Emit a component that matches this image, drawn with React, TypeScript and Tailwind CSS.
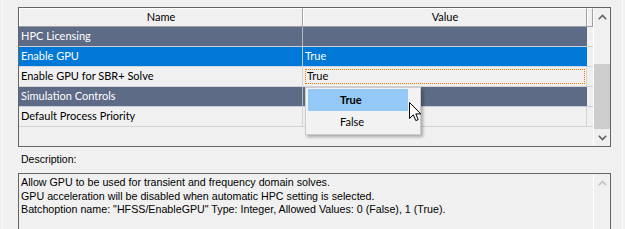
import React from 'react';

type Row = {
  name: string;
  value?: string;
  kind: 'cat' | 'sel' | 'focus' | 'prop';
};

const rows: Row[] = [
  { name: 'HPC Licensing', kind: 'cat' },
  { name: 'Enable GPU', value: 'True', kind: 'sel' },
  { name: 'Enable GPU for SBR+ Solve', value: 'True', kind: 'focus' },
  { name: 'Simulation Controls', kind: 'cat' },
  { name: 'Default Process Priority', value: '', kind: 'prop' },
];

const Chevron = ({ down = false, color = '#606060' }: { down?: boolean; color?: string }) => (
  <svg width="9" height="6" viewBox="0 0 9 6" className={down ? 'rotate-180' : ''}>
    <polyline points="0.8,5.2 4.5,1.5 8.2,5.2" fill="none" stroke={color} strokeWidth="1.6" />
  </svg>
);

const GridRow = ({ row }: { row: Row }) => {
  if (row.kind === 'cat') {
    return (
      <div className="flex h-[20px] border-b border-[#c9ced8]">
        <div className="w-[284px] border-r border-[#b4bac6] bg-[#5e6b86] pl-[2px] flex items-center text-white">
          {row.name}
        </div>
        <div className="w-[284px] bg-[#5e6b86]" />
      </div>
    );
  }
  if (row.kind === 'sel') {
    return (
      <div className="flex h-[20px] border-b border-[#cfd8e2]">
        <div className="w-[284px] border-r border-[#c0cfe0] bg-[#0078d7] pl-[2px] flex items-center text-white">
          {row.name}
        </div>
        <div className="w-[284px] bg-[#0078d7] pl-[2px] flex items-center text-white">{row.value}</div>
      </div>
    );
  }
  return (
    <div className="flex h-[20px] border-b border-[#d4d4d4]">
      <div className="w-[284px] border-r border-[#d4d4d4] pl-[2px] flex items-center text-black">{row.name}</div>
      <div className="w-[284px] border-r border-[#d4d4d4] pl-[2px] pr-px py-[2px] flex">
        {row.kind === 'focus' ? (
          <div className="flex-1 border border-dotted border-[#f07800] flex items-center pl-px text-black">
            {row.value}
          </div>
        ) : (
          <div className="flex-1 flex items-center text-black">{row.value}</div>
        )}
      </div>
    </div>
  );
};

const Cursor = () => (
  <svg width="13" height="20" viewBox="0 0 13 20">
    <path
      d="M0.5 0.5 L0.5 16.5 L4.3 12.8 L6.8 18.6 L9.2 17.6 L6.8 11.9 L11.8 11.9 Z"
      fill="#ffffff"
      stroke="#000000"
      strokeWidth="1"
      strokeLinejoin="miter"
    />
  </svg>
);

export default function App() {
  return (
    <div className="relative w-[625px] h-[229px] overflow-hidden bg-[#f0f0f0] flex font-['Lato','Liberation_Sans',sans-serif] text-[11px]">
      <div className="w-[2px]" />
      <div className="w-px bg-[#fafafa]" />
      <div className="w-[15px]" />

      <div className="w-[593px] flex flex-col pt-[7px]">
        {/* property grid */}
        <div className="h-[140px] border border-[#646464] flex">
          <div className="w-[574px] flex flex-col">
            <div className="flex h-[19px] border-b border-[#a0a0a0]">
              <div className="w-[284px] border-t border-l border-white border-r border-r-[#a0a0a0] flex items-center justify-center text-black">
                Name
              </div>
              <div className="w-[284px] border-t border-l border-white border-r border-r-[#a0a0a0] flex items-center justify-center text-black">
                Value
              </div>
              <div className="w-[6px] border-t border-l border-white border-r border-r-[#a0a0a0]" />
            </div>
            {rows.map((r) => (
              <GridRow key={r.name} row={r} />
            ))}
          </div>
          <div className="w-[17px] border-l border-white flex flex-col">
            <div className="h-[17px] flex items-center justify-center">
              <Chevron />
            </div>
            <div className="h-[39px]" />
            <div className="h-[65px] bg-[#cdcdcd]" />
            <div className="h-[17px] flex items-center justify-center">
              <Chevron down />
            </div>
          </div>
        </div>

        {/* description */}
        <div className="h-[28px] flex items-center pl-[3px] font-['Liberation_Sans',sans-serif] text-[10.5px] text-black">
          Description:
        </div>
        <div className="h-[60px] border-t border-l border-r border-[#646464] flex">
          <div className="flex-1 pl-[2px] pt-[2px] font-['Liberation_Sans',sans-serif] text-[10.7px] leading-[13.5px] text-black">
            <p>Allow GPU to be used for transient and frequency domain solves.</p>
            <p>GPU acceleration will be disabled when automatic HPC setting is selected.</p>
            <p>Batchoption name: "HFSS/EnableGPU" Type: Integer, Allowed Values: 0 (False), 1 (True).</p>
          </div>
          <div className="w-[17px] border-l border-white flex flex-col">
            <div className="h-[17px] flex items-center justify-center">
              <Chevron color="#c2c2c2" />
            </div>
          </div>
        </div>
      </div>

      <div className="w-[11px]" />
      <div className="w-px bg-[#fafafa]" />

      {/* dropdown list */}
      <div className="absolute left-[305px] top-[87px] w-[116px] h-[48px] bg-[#f2f2f2] border border-[#cccccc] shadow-[2px_2px_3px_rgba(0,0,0,0.3)] py-px pl-[2px] pr-[12px] flex flex-col">
        <div className="h-[22px] bg-[#94c8f6] flex items-center pl-[32px] font-bold text-black">True</div>
        <div className="h-[22px] flex items-center pl-[32px] text-black">False</div>
      </div>

      <div className="absolute left-[409px] top-[102px]">
        <Cursor />
      </div>
    </div>
  );
}
